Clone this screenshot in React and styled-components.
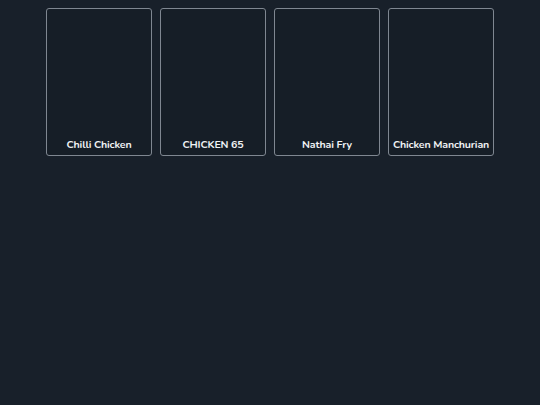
import React from "react";
import styled, { createGlobalStyle } from "styled-components";

const dishes = ["Chilli Chicken", "CHICKEN 65", "Nathai Fry", "Chicken Manchurian"];

function App() {
  return (
    <>
      <GlobalStyle />
      <Page>
        <Grid>
          {dishes.map((name) => (
            <Card key={name}>
              <Title>{name}</Title>
            </Card>
          ))}
        </Grid>
      </Page>
    </>
  );
}

export default App;

const GlobalStyle = createGlobalStyle`
  html, body {
    margin: 0;
    padding: 0;
    background-color: #18202a;
  }
  body {
    font-family: "Nunito", "Lato", "Open Sans", sans-serif;
  }
`;

const Page = styled.div`
  min-height: 405px;
  background-color: #18202a;
  display: flex;
  justify-content: center;
  padding-top: 8px;
  box-sizing: border-box;
`;

const Grid = styled.div`
  display: flex;
  gap: 8px;
`;

const Card = styled.div`
  width: 106px;
  height: 148px;
  box-sizing: border-box;
  border: 1px solid #7f8791;
  border-radius: 3px;
  background-color: #161e27;
  display: flex;
  align-items: flex-end;
  justify-content: center;
  padding-bottom: 3px;
`;

const Title = styled.div`
  color: #f1f3f5;
  font-size: 10.6px;
  font-weight: 700;
  letter-spacing: -0.15px;
  white-space: nowrap;
`;
